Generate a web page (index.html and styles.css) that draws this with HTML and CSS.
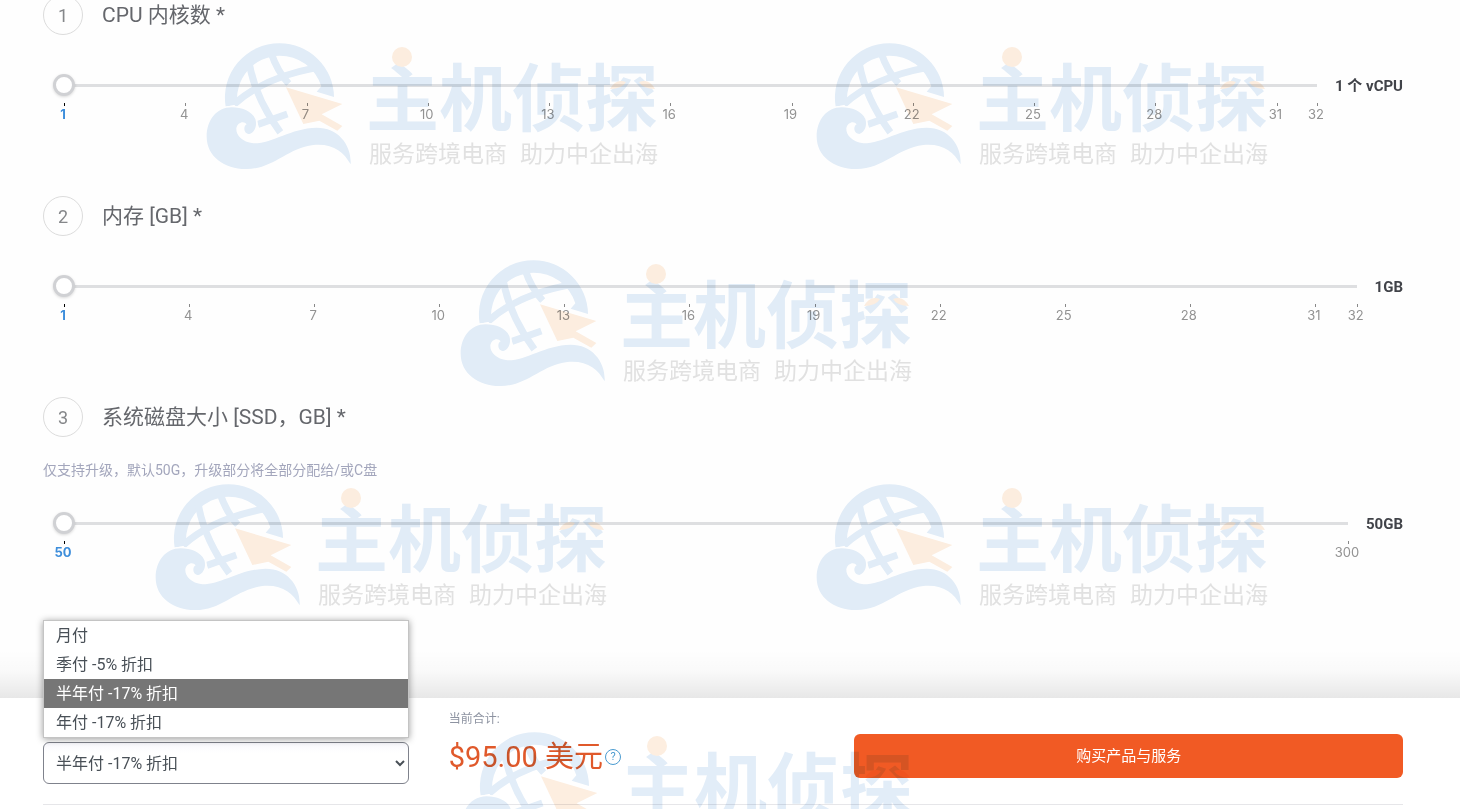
FILE: index.html
```html
<!DOCTYPE html>
<html lang="zh-CN">
<head>
    <meta charset="UTF-8">
    <meta name="viewport" content="width=device-width, initial-scale=1.0">
    <title>购买产品与服务</title>
    <link rel="stylesheet" href="styles.css">
</head>
<body>
    <!-- Shared watermark symbol -->
    <svg class="defs" width="0" height="0" aria-hidden="true">
        <symbol id="watermark" viewBox="0 0 460 132">
            <g transform="translate(-6 -8) scale(0.33333)">
                <path class="wm-blue" d="M77 215A163 163 0 0 1 238 25A163 163 0 0 1 402 186L350 170L364 154A130 130 0 0 0 238 62A130 130 0 0 0 112 208Z"/>
                <g class="wm-grid">
                    <path d="M148 86Q166 190 241 292"/>
                    <path d="M102 208Q190 128 350 98"/>
                    <path d="M212 50Q232 110 266 146"/>
                    <path d="M174 268L262 237"/>
                </g>
                <path class="wm-orange wm-halo" d="M258 157L427 207L365 238L427 273L412 287L358 257L310 267Z"/>
                <path class="wm-blue wm-halo" d="M95 217C50 217 20 255 20 305C20 365 75 403 140 402C220 402 260 340 340 330C400 325 430 350 452 388C455 330 415 278 350 278C270 280 220 325 160 325C125 320 108 300 109 280C112 262 132 256 140 268C128 275 132 297 148 297C165 292 172 270 166 252C155 228 125 217 95 217Z"/>
            </g>
            <text class="wm-name" x="160" y="82">主机侦探</text>
            <circle class="wm-orange" cx="196" cy="14" r="10"/>
            <path class="wm-orange" d="M404 46Q410 35 420 39Q416 46 404 46ZM449 46Q443 35 433 39Q437 46 449 46Z"/>
            <text class="wm-tag" x="163" y="119">服务跨境电商</text>
            <text class="wm-tag" x="314" y="119">助力中企出海</text>
        </symbol>
    </svg>

    <main class="options">
        <section class="option">
            <div class="option-head">
                <span class="step">1</span>
                <h2><label for="cpu">CPU 内核数 *</label></h2>
            </div>
            <div class="slider-row">
                <div class="slider">
                    <input type="range" id="cpu" min="1" max="32" value="1">
                    <ul class="ticks">
                        <li class="active"><span>1</span></li>
                        <li><span>4</span></li>
                        <li><span>7</span></li>
                        <li><span>10</span></li>
                        <li><span>13</span></li>
                        <li><span>16</span></li>
                        <li><span>19</span></li>
                        <li><span>22</span></li>
                        <li><span>25</span></li>
                        <li><span>28</span></li>
                        <li class="short"><span>31</span></li>
                        <li class="end"><span>32</span></li>
                    </ul>
                </div>
                <output class="value" for="cpu">1 个 vCPU</output>
            </div>
        </section>

        <section class="option">
            <div class="option-head">
                <span class="step">2</span>
                <h2><label for="memory">内存 [GB] *</label></h2>
            </div>
            <div class="slider-row">
                <div class="slider">
                    <input type="range" id="memory" min="1" max="32" value="1">
                    <ul class="ticks">
                        <li class="active"><span>1</span></li>
                        <li><span>4</span></li>
                        <li><span>7</span></li>
                        <li><span>10</span></li>
                        <li><span>13</span></li>
                        <li><span>16</span></li>
                        <li><span>19</span></li>
                        <li><span>22</span></li>
                        <li><span>25</span></li>
                        <li><span>28</span></li>
                        <li class="short"><span>31</span></li>
                        <li class="end"><span>32</span></li>
                    </ul>
                </div>
                <output class="value" for="memory">1GB</output>
            </div>
        </section>

        <section class="option">
            <div class="option-head">
                <span class="step">3</span>
                <h2><label for="disk">系统磁盘大小 [SSD，GB] *</label></h2>
            </div>
            <p class="note">仅支持升级，默认50G，升级部分将全部分配给/或C盘</p>
            <div class="slider-row">
                <div class="slider">
                    <input type="range" id="disk" min="50" max="300" value="50">
                    <ul class="ticks">
                        <li class="active"><span>50</span></li>
                        <li class="end"><span>300</span></li>
                    </ul>
                </div>
                <output class="value" for="disk">50GB</output>
            </div>
        </section>
    </main>

    <footer class="order-bar">
        <div class="order-row">
            <div class="cycle">
                <!-- Open option list -->
                <ul class="cycle-list" role="listbox" aria-label="付款周期">
                    <li role="option">月付</li>
                    <li role="option">季付 -5% 折扣</li>
                    <li role="option" class="selected" aria-selected="true">半年付 -17% 折扣</li>
                    <li role="option">年付 -17% 折扣</li>
                </ul>
                <select class="cycle-select" aria-label="付款周期">
                    <option>月付</option>
                    <option>季付 -5% 折扣</option>
                    <option selected>半年付 -17% 折扣</option>
                    <option>年付 -17% 折扣</option>
                </select>
            </div>
            <div class="total">
                <p class="total-label">当前合计:</p>
                <p class="total-price">
                    $95.00 美元
                    <button class="help" type="button">?</button>
                </p>
            </div>
            <button class="buy-button" type="button">购买产品与服务</button>
        </div>
    </footer>

    <div class="watermarks" aria-hidden="true">
        <svg class="wm wm-1"><use href="#watermark"/></svg>
        <svg class="wm wm-2"><use href="#watermark"/></svg>
        <svg class="wm wm-3"><use href="#watermark"/></svg>
        <svg class="wm wm-4"><use href="#watermark"/></svg>
        <svg class="wm wm-5"><use href="#watermark"/></svg>
        <svg class="wm wm-6"><use href="#watermark"/></svg>
    </div>
</body>
</html>
```
FILE: styles.css
```css
* {
    box-sizing: border-box;
}

body {
    position: relative;
    display: flex;
    flex-direction: column;
    min-height: 100vh;
    margin: 0;
    overflow: hidden;
    background-color: #fefefe;
    color: #495057;
    font-family: Roboto, "Noto Sans CJK SC", sans-serif;
    font-size: 16px;
}

h2, p, ul {
    margin: 0;
    padding: 0;
}

ul {
    list-style: none;
}

.defs {
    position: absolute;
}

/* Options */
.options {
    margin-top: -5px;
    padding: 0 57px 0 43px;
}

.option {
    margin-bottom: 75px;
}

.option-head {
    display: flex;
    align-items: center;
    gap: 19px;
    height: 40px;
    margin-bottom: 39px;
}

.step {
    display: flex;
    align-items: center;
    justify-content: center;
    width: 40px;
    height: 40px;
    border: 1px solid #dcdcdc;
    border-radius: 50%;
    color: #85878a;
    font-size: 18px;
}

.option-head h2 {
    color: #65676c;
    font-size: 21px;
    font-weight: 400;
    line-height: 40px;
}

.note {
    margin: -15px 0 33px;
    color: #a3a6bc;
    font-size: 14px;
    line-height: 18px;
}

.slider-row {
    display: flex;
    align-items: flex-start;
    gap: 18px;
}

.slider {
    flex: 1;
    padding-left: 21px;
}

.slider input {
    display: block;
    width: calc(100% + 22px);
    height: 22px;
    margin: 0 -11px 7px;
    appearance: none;
    background: linear-gradient(#dedfe1, #dedfe1) center / calc(100% - 22px) 3px no-repeat;
}

.slider input::-webkit-slider-thumb {
    appearance: none;
    width: 22px;
    height: 22px;
    border: 3px solid #d0d1d4;
    border-radius: 50%;
    background-color: #fff;
    box-shadow: 0 1px 3px rgba(0, 0, 0, 0.15);
}

.ticks {
    display: flex;
    height: 18px;
    color: #929292;
    font-family: Inter, sans-serif;
    font-size: 13px;
    line-height: 14px;
}

.ticks li {
    flex: 3 1 0;
    width: 0;
}

.ticks li.short {
    flex-grow: 1;
}

.ticks li.end {
    flex-grow: 0;
}

.ticks li::before {
    content: "";
    display: block;
    width: 1px;
    height: 3px;
    margin-bottom: 1px;
    background-color: #888;
}

.ticks span {
    display: block;
    width: 30px;
    margin-left: -16px;
    text-align: center;
}

.ticks .active {
    color: #3e8edb;
    font-weight: 700;
}

.ticks .active::before {
    background-color: #000;
}

.value {
    color: #414349;
    font-size: 15px;
    font-weight: 700;
    line-height: 24px;
}

/* Order bar */
.order-bar {
    position: relative;
    margin-top: auto;
    padding: 13px 57px 4px 43px;
    background-color: #fff;
}

.order-bar::before {
    content: "";
    position: absolute;
    right: 0;
    bottom: 100%;
    left: 0;
    height: 48px;
    background: linear-gradient(rgba(0, 0, 0, 0), rgba(0, 0, 0, 0.02) 45%, rgba(0, 0, 0, 0.09));
}

.order-row {
    display: grid;
    grid-template-columns: 2fr 2fr 3fr;
    gap: 40px;
    padding-bottom: 20px;
    border-bottom: 1px solid #e6e6e9;
}

.cycle {
    position: relative;
    padding-top: 31px;
}

.cycle-select {
    display: block;
    width: 100%;
    height: 42px;
    padding: 0 0 0 8px;
    border: 1px solid #7f828c;
    border-radius: 6px;
    background: linear-gradient(#f8f8fd, #fff 10px);
    color: #495057;
    font: inherit;
}

.cycle-list {
    position: absolute;
    bottom: 46px;
    left: 0;
    width: 100%;
    border: 1px solid #c4c4c4;
    background-color: #fff;
    box-shadow: 0 1px 7px rgba(0, 0, 0, 0.4);
}

.cycle-list li {
    height: 29px;
    padding-left: 12px;
    line-height: 30px;
}

.cycle-list .selected {
    background-color: #767676;
    color: #fff;
}

.total-label {
    color: #8d93a1;
    font-size: 12px;
    line-height: 16px;
}

.total-price {
    display: flex;
    align-items: center;
    gap: 2px;
    margin-top: 10px;
    color: #e0592b;
    font-size: 29px;
    line-height: 40px;
}

.help {
    width: 16px;
    height: 16px;
    padding: 0;
    border: 1px solid #4a9bd0;
    border-radius: 50%;
    background: none;
    color: #4a9bd0;
    font-family: Roboto, sans-serif;
    font-size: 11px;
    line-height: 14px;
}

.buy-button {
    height: 44px;
    margin-top: 23px;
    padding: 0 0 4px;
    border: none;
    border-radius: 6px;
    background-color: #f15a24;
    color: #fff;
    font: inherit;
    font-size: 15px;
    cursor: pointer;
}

/* Watermarks lie over the whole page */
.watermarks {
    position: absolute;
    inset: 0;
    overflow: hidden;
    pointer-events: none;
    mix-blend-mode: multiply;
}

.wm {
    position: absolute;
    width: 460px;
    height: 132px;
}

.wm-1 {
    top: 43px;
    left: 206px;
}

.wm-2 {
    top: 43px;
    left: 816px;
}

.wm-3 {
    top: 260px;
    left: 460px;
}

.wm-4 {
    top: 484px;
    left: 155px;
}

.wm-5 {
    top: 484px;
    left: 816px;
}

.wm-6 {
    top: 732px;
    left: 461px;
}

.wm-blue {
    fill: #e2edf8;
}

.wm-orange {
    fill: #fdeee0;
}

.wm-halo {
    stroke: #fff;
    stroke-width: 10px;
    paint-order: stroke;
}

.wm-grid {
    fill: none;
    stroke: #e2edf8;
    stroke-width: 21px;
}

.wm-name {
    fill: #e2edf8;
    font-family: "Noto Sans CJK SC", sans-serif;
    font-size: 73px;
    font-weight: 700;
}

.wm-tag {
    fill: #e2e2e2;
    font-family: "Noto Sans CJK SC", sans-serif;
    font-size: 23px;
}
```
